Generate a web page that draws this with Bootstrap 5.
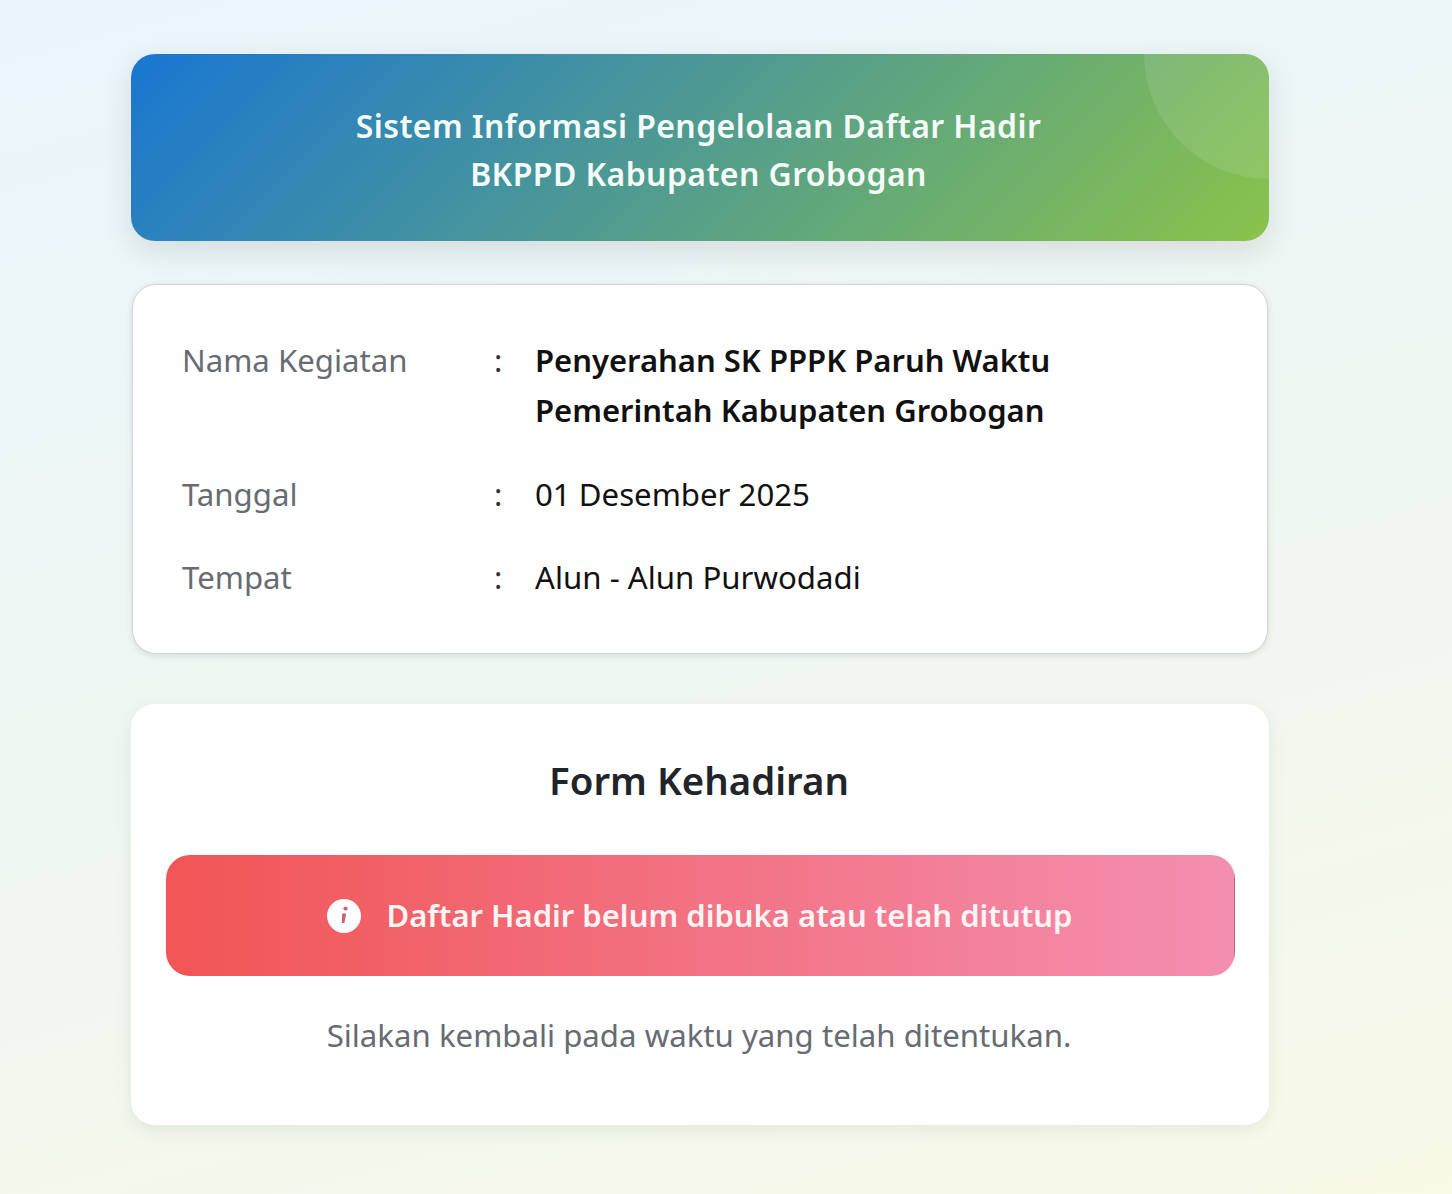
<!DOCTYPE html>
<html lang="id">
<head>
<meta charset="utf-8">
<title>Daftar Hadir</title>
<link href="https://cdn.jsdelivr.net/npm/bootstrap@5.3.0/dist/css/bootstrap.min.css" rel="stylesheet">
<style>
html,body{height:100%}
body{font-family:"Noto Sans","Open Sans",sans-serif;background:linear-gradient(165deg,#eaf4fb 0%,#f0f7f0 60%,#f9fae8 100%);min-height:1194px;color:#212529}
.page-wrap{width:1138px;margin-left:131px;padding-top:54px}
.hero-box{position:relative;overflow:hidden;height:187px;border-radius:24px;padding:4px 3px 0 0;background:linear-gradient(135deg,#1976d2 0%,#8bc34a 100%);box-shadow:0 10px 30px rgba(0,0,0,.1);color:#f4fbf8;font-size:32px;line-height:48px;font-weight:600;letter-spacing:.4px}
.hero-box::after{content:"";position:absolute;width:250px;height:250px;border-radius:50%;top:-125px;right:-125px;background:rgba(255,255,255,.1)}
.info-box{margin:43px 1px 0;height:370px;padding:50px 50px 0 49px;background:#fff;border:1px solid #d0d4d6;border-radius:24px;box-shadow:0 2px 6px rgba(0,0,0,.1);font-size:31.2px;line-height:50px}
.info-line{margin-bottom:33.5px}
.info-label{width:312px;color:#666c72;flex:none}
.info-colon{width:41px;flex:none;color:#333}
.info-value{color:#111;width:560px}
.info-value.fw-semibold{font-size:31px}
.form-box{margin-top:50px;height:421px;padding:51px 34px 0 35px;background:#fff;border-radius:24px;box-shadow:0 6px 18px rgba(0,0,0,.07);text-align:center}
.form-title{font-size:38.4px;line-height:50px;font-weight:600;margin:0 3px 50px 0;color:#212529}
.closed-box{height:121px;padding:0 3px 0 0;border-radius:24px;background:linear-gradient(rgba(120,60,80,.55),rgba(120,60,80,.55)) right center/1px 92px no-repeat,linear-gradient(90deg,#f15555 0%,#f48fb1 100%);color:#fdf4f4;font-size:31px;font-weight:600;gap:25px}
.closed-note{margin:34px 3px 0 0;font-size:31.2px;line-height:50px;color:#666c72}
</style>
</head>
<body>
<div class="page-wrap">
  <div class="hero-box d-flex align-items-center justify-content-center text-center">
    <div>Sistem Informasi Pengelolaan Daftar Hadir<br>BKPPD Kabupaten Grobogan</div>
  </div>
  <div class="info-box">
    <div class="d-flex info-line"><div class="info-label">Nama Kegiatan</div><div class="info-colon">:</div><div class="info-value fw-semibold">Penyerahan SK PPPK Paruh Waktu Pemerintah Kabupaten Grobogan</div></div>
    <div class="d-flex info-line"><div class="info-label">Tanggal</div><div class="info-colon">:</div><div class="info-value">01 Desember 2025</div></div>
    <div class="d-flex info-line"><div class="info-label">Tempat</div><div class="info-colon">:</div><div class="info-value">Alun - Alun Purwodadi</div></div>
  </div>
  <div class="form-box">
    <h2 class="form-title">Form Kehadiran</h2>
    <div class="closed-box d-flex align-items-center justify-content-center">
      <svg width="36" height="36" viewBox="0 0 36 36" aria-hidden="true"><circle cx="18" cy="18" r="17" fill="#fff"/><circle cx="19.5" cy="10.5" r="2.1" fill="#c9606c"/><path d="M16.2 15.5h4l-1.8 9.5h-2.6z" fill="#c9606c"/></svg>
      <span>Daftar Hadir belum dibuka atau telah ditutup</span>
    </div>
    <p class="closed-note">Silakan kembali pada waktu yang telah ditentukan.</p>
  </div>
</div>
<script src="https://cdn.jsdelivr.net/npm/bootstrap@5.3.0/dist/js/bootstrap.bundle.min.js"></script>
</body>
</html>
